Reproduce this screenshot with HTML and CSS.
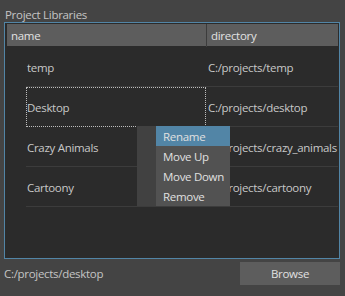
FILE: index.html
```html
<!DOCTYPE html>
<html lang="en">
<head>
    <meta charset="UTF-8">
    <title>Project Libraries</title>
    <link rel="stylesheet" href="styles.css">
</head>
<body>
    <div class="panel">
        <div class="title">Project Libraries</div>
        <div class="frame">
            <div class="header">
                <div class="head-cell">name</div>
                <div class="head-cell head-dir">directory</div>
            </div>
            <div class="rows">
                <div class="row">
                    <div class="cell name">temp</div>
                    <div class="cell dir">C:/projects/temp</div>
                </div>
                <div class="row">
                    <div class="cell name focused">Desktop</div>
                    <div class="cell dir">C:/projects/desktop</div>
                </div>
                <div class="row">
                    <div class="cell name">Crazy Animals</div>
                    <div class="cell dir">C:/projects/crazy_animals</div>
                </div>
                <div class="row">
                    <div class="cell name">Cartoony</div>
                    <div class="cell dir">C:/projects/cartoony</div>
                </div>
            </div>

            <!-- context menu over the list -->
            <div class="menu">
                <div class="gutter"></div>
                <div class="items">
                    <div class="item active">Rename</div>
                    <div class="item">Move Up</div>
                    <div class="item">Move Down</div>
                    <div class="item">Remove</div>
                </div>
            </div>
        </div>
        <div class="footer">
            <span class="path">C:/projects/desktop</span>
            <button class="button">Browse</button>
        </div>
    </div>
</body>
</html>
```

FILE: styles.css
```css
body {
    margin: 0;
    background: #444444;
    font-family: "Open Sans", "Noto Sans", sans-serif;
    font-size: 11.5px;
    letter-spacing: -0.3px;
    color: #c8c8c8;
}

.panel {
    padding: 8px 5px 0 4px;
}

.title {
    height: 14px;
    line-height: 14px;
    padding-left: 1px;
    color: #c4c4c4;
}

.frame {
    position: relative;
    box-sizing: border-box;
    width: 336px;
    height: 237px;
    border: 1px solid #5285a6;
    padding: 1px 1px 0 2px;
    background: #2b2b2b;
}

.header {
    display: grid;
    grid-template-columns: 199px 1fr;
    height: 22px;
    background: #5d5d5d;
    color: #e2e2e2;
}

.head-cell {
    padding-left: 4px;
    line-height: 23px;
}

.head-dir {
    border-left: 1px solid #3c3c3c;
}

.rows {
    margin-top: 1px;
}

.row {
    display: grid;
    grid-template-columns: 180px 1fr;
    margin-left: 19px;
    height: 40px;
}

.cell {
    box-sizing: border-box;
    height: 40px;
    line-height: 42px;
    border-bottom: 1px solid #3c3c3c;
    white-space: nowrap;
    overflow: hidden;
}

.name {
    padding-left: 1px;
}

.dir {
    padding-left: 2px;
}

.focused {
    border-bottom: 1px dotted #bdbdbd;
    outline: 1px dotted #bdbdbd;
    outline-offset: -1px;
}

.menu {
    position: absolute;
    left: 132px;
    top: 103px;
    display: flex;
    width: 93px;
    height: 80px;
    color: #e0e0e0;
}

.gutter {
    width: 19px;
    background: #414141;
}

.items {
    flex: 1;
    background: #525252;
}

.item {
    height: 20px;
    line-height: 21px;
    padding-left: 7px;
    white-space: nowrap;
}

.item.active {
    background: #5285a6;
}

.footer {
    display: flex;
    justify-content: space-between;
    align-items: center;
    margin-top: 3px;
}

.path {
    color: #c4c4c4;
}

.button {
    width: 100px;
    height: 23px;
    border: none;
    background: #5d5d5d;
    color: #e0e0e0;
    font-family: inherit;
    font-size: 11.5px;
    letter-spacing: inherit;
    padding: 0;
}
```
